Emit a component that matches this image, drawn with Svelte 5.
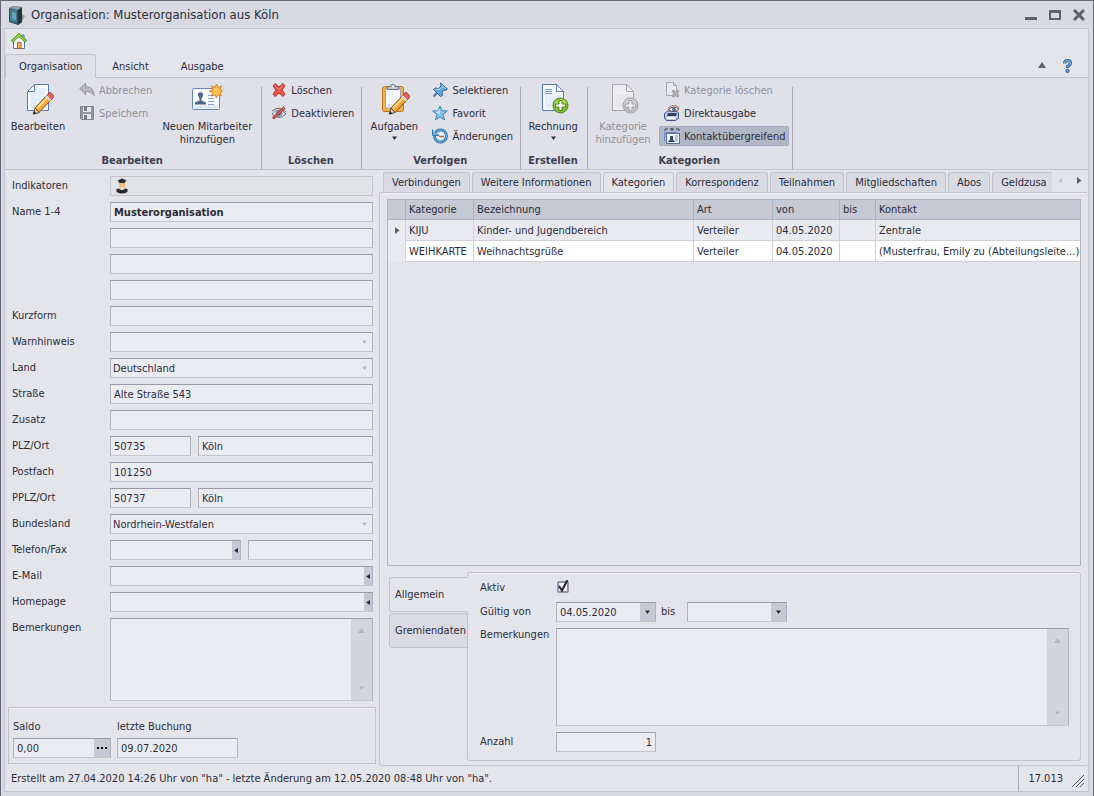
<script>
	let activeRibbon = 'Organisation';
	let activeTab = 'Kategorien';
	let activeSide = 'Allgemein';
	let aktiv = true;

	const ribbonTabs = ['Organisation', 'Ansicht', 'Ausgabe'];
	const tabs = [
		'Verbindungen', 'Weitere Informationen', 'Kategorien', 'Korrespondenz',
		'Teilnahmen', 'Mitgliedschaften', 'Abos', 'Geldzusa',
	];
	const sideTabs = ['Allgemein', 'Gremiendaten'];

	const rows = [
		{ id: 'name1', label: 'Name 1-4', fields: [{ value: 'Musterorganisation', bold: true }] },
		{ id: 'name2', label: '', aria: 'Name 2', fields: [{ value: '' }] },
		{ id: 'name3', label: '', aria: 'Name 3', fields: [{ value: '' }] },
		{ id: 'name4', label: '', aria: 'Name 4', fields: [{ value: '' }] },
		{ id: 'kurzform', label: 'Kurzform', fields: [{ value: '' }] },
		{ id: 'warnhinweis', label: 'Warnhinweis', fields: [{ value: '', type: 'select' }] },
		{ id: 'land', label: 'Land', fields: [{ value: 'Deutschland', type: 'select' }] },
		{ id: 'strasse', label: 'Straße', fields: [{ value: 'Alte Straße 543' }] },
		{ id: 'zusatz', label: 'Zusatz', fields: [{ value: '' }] },
		{ id: 'plz', label: 'PLZ/Ort', fields: [{ value: '50735', size: 'plz' }, { value: 'Köln' }] },
		{ id: 'postfach', label: 'Postfach', fields: [{ value: '101250' }] },
		{ id: 'pplz', label: 'PPLZ/Ort', fields: [{ value: '50737', size: 'plz' }, { value: 'Köln' }] },
		{ id: 'bundesland', label: 'Bundesland', fields: [{ value: 'Nordrhein-Westfalen', type: 'select' }] },
		{ id: 'telefon', label: 'Telefon/Fax', fields: [{ value: '', type: 'action', size: 'tel' }, { value: '' }] },
		{ id: 'email', label: 'E-Mail', fields: [{ value: '', type: 'action' }] },
		{ id: 'homepage', label: 'Homepage', fields: [{ value: '', type: 'action' }] },
	];

	const kategorien = [
		{ kategorie: 'KIJU', bezeichnung: 'Kinder- und Jugendbereich', art: 'Verteiler', von: '04.05.2020', bis: '', kontakt: 'Zentrale' },
		{ kategorie: 'WEIHKARTE', bezeichnung: 'Weihnachtsgrüße', art: 'Verteiler', von: '04.05.2020', bis: '', kontakt: '(Musterfrau, Emily zu (Abteilungsleite...)' },
	];
	let selected = 0;
</script>

{#snippet arrow(dir)}
	<svg class="arrow" width="7" height="7" viewBox="0 0 7 7" aria-hidden="true">
		{#if dir === 'down'}<path d="M1 1.500h5L3.500 5z" />
		{:else if dir === 'up'}<path d="M0 6h7L3.500 1z" />
		{:else if dir === 'left'}<path d="M5 1v5L1 3.500z" />
		{:else}<path d="M1 0v7L5.500 3.500z" />{/if}
	</svg>
{/snippet}

{#snippet pencil()}
	<path d="M13 25L24.500 12.500l4.500 4.500L17 29.500z" fill="#f5a536" stroke="#8d5518" />
	<path d="M15 25.500L26 14" stroke="#ffd98a" stroke-width="2" />
	<path d="M13 25l4 4.500-5.500 1.500z" fill="#f4dcb0" stroke="#5c4632" />
	<path d="M12 28l2.500 2.500-3.500 1z" fill="#222" />
	<path d="M24.500 12.500l2.500-2.500q1-.8 2 0l2.500 2.500q.8 1 0 2L29 17z" fill="#e2675a" stroke="#a03c33" />
	<path d="M24 13l4.500 4.500" stroke="#dfe2ec" stroke-width="2" />
{/snippet}

{#snippet icon(name)}
	{#if name === 'app'}
		<svg width="18" height="20" viewBox="0 0 18 20" aria-hidden="true">
			<path d="M12 8l5 3-4 7H9z" fill="#9a9ca9" />
			<path d="M1 3l4-2 9 1v15l-4 3-9-3z" fill="#33505e" />
			<path d="M2 4l7 1v13l-7-2z" fill="#44788c" />
			<path d="M4 7l4 1v7l-4-1z" fill="#67a5b9" />
			<path d="M10 5l4-3v15l-4 3z" fill="#26343d" />
			<path d="M1 3l4-2 9 1-4 3z" fill="#8d9ea8" />
		</svg>
	{:else if name === 'home'}
		<svg width="16" height="16" viewBox="0 0 16 16" aria-hidden="true">
			<path d="M11 2h2v4h-2z" fill="#fff" stroke="#526ca1" />
			<path d="M2.500 8L8 3l5.500 5v7.500h-11z" fill="#f8fbff" stroke="#5471a5" />
			<path d="M6.500 15.500v-6h3.500v6z" fill="#f6b45b" stroke="#ad5b17" />
			<path d="M1 8.500L8 2l7 6.500" fill="none" stroke="#4b8419" stroke-width="3" />
			<path d="M1.500 8L8 2l6.500 6" fill="none" stroke="#a4db48" stroke-width="1.500" />
		</svg>
	{:else if name === 'edit'}
		<svg width="32" height="32" viewBox="0 0 32 32" aria-hidden="true">
			<path d="M5.500 8.500l7-7h14v26h-21z" fill="#f7fbff" stroke="#5878b8" />
			<path d="M8 10l5-5h11v20H8z" fill="#e6eef9" />
			<path d="M5.500 8.500h7v-7z" fill="#fff" stroke="#5878b8" />
			{@render pencil()}
		</svg>
	{:else if name === 'undo'}
		<svg width="16" height="16" viewBox="0 0 16 16" aria-hidden="true">
			<path d="M.8 6.500L6.500 1.500v3q8 0 8.500 9-3-4.500-8.500-4v3z" fill="#b8b9bd" stroke="#919298" />
		</svg>
	{:else if name === 'save'}
		<svg width="16" height="16" viewBox="0 0 16 16" aria-hidden="true">
			<path d="M1.500 1.500h13v13h-12l-1-1z" fill="#94959b" stroke="#818289" />
			<path d="M4 2h8v5H4zM4 9h8v5H4z" fill="#e6e7ea" />
			<path d="M5 2h3v4H5zM5 10h3v4H5z" fill="#777980" />
		</svg>
	{:else if name === 'contact'}
		<svg width="32" height="32" viewBox="0 0 32 32" aria-hidden="true">
			<rect x="1.500" y="5.500" width="27" height="21" rx="1" fill="#f8fbff" stroke="#6685bc" />
			<path d="M3 24h24" stroke="#dce7f6" stroke-width="3" />
			<path d="M4 21.500v-2l4.500-2v-2q-2-2-1.500-5 2.500-2.500 5 0 .5 3-1.500 5v2l4.500 2v2z" fill="#50658c" />
			<path d="M17 12.500h6M17 15.500h6M17 18.500h6M17 21.500h6" stroke="#819fc9" />
			<path d="M25.500 1l1.400 3.600 3.500-1.600-1.300 3.500 2.500 1.500-2.500 1.500 1.300 3.500-3.500-1.400-1.400 3.400-1.400-3.400-3.500 1.400 1.400-3.500L18.500 8l3.500-1.500L20.600 3l3.500 1.600z" fill="#ffc251" stroke="#cf812a" />
		</svg>
	{:else if name === 'delete'}
		<svg width="16" height="16" viewBox="0 0 16 16" aria-hidden="true">
			<path d="M2 4l2-2.500L8 5l4-3.500L14 4l-3 4 3 4-2 2.500L8 11l-4 3.500L2 12l3-4z" fill="#e7564c" stroke="#b7322e" />
			<path d="M4 3.500l4 4 4-4" stroke="#fa9286" fill="none" />
		</svg>
	{:else if name === 'deactivate'}
		<svg width="16" height="16" viewBox="0 0 16 16" aria-hidden="true">
			<path d="M1 9q7-8 14 0-7 7-14 0z" fill="#f6f8fd" stroke="#6a6d88" />
			<path d="M1 6q7-6 14 1" fill="none" stroke="#80604f" />
			<circle cx="8" cy="8.500" r="3.500" fill="#8896bd" /><circle cx="8" cy="8.500" r="1.500" fill="#343b52" />
			<path d="M2 13.500L13.500 2.500" stroke="#a93839" stroke-width="3" /><path d="M2.500 13L13 3" stroke="#e98075" />
		</svg>
	{:else if name === 'tasks'}
		<svg width="32" height="32" viewBox="0 0 32 32" aria-hidden="true">
			<rect x="4.500" y="3.500" width="21" height="25" rx="2" fill="#f4af48" stroke="#b97724" />
			<path d="M7.500 6h15v19h-15z" fill="#f6f8fe" stroke="#a6a6b4" />
			<path d="M10 21h6l-5 4H9z" fill="#d9dfed" />
			<path d="M9.500 6.500v-3h3q0-2 2.500-2t2.500 2h3v3z" fill="#bbc3d5" stroke="#6a7490" />
			<path d="M14 3.500h2" stroke="#fff" stroke-width="2" />
			{@render pencil()}
		</svg>
	{:else if name === 'pin'}
		<svg width="16" height="16" viewBox="0 0 16 16" aria-hidden="true">
			<path d="M1.500 14.500L6 10" stroke="#577492" stroke-width="2" />
			<path d="M8.500 1l7 6-2.500 1.500-1-.5-2 2 .5 3.500-2 1L1.500 7.500l2-1.500 3 .5L9 4z" fill="#62a8dc" stroke="#2a6398" />
			<path d="M9.500 3l4 3.500M4 7.500l4-.5 2-2" fill="none" stroke="#b3e1fb" />
		</svg>
	{:else if name === 'star'}
		<svg width="16" height="16" viewBox="0 0 16 16" aria-hidden="true">
			<path d="M8 1l2 4.700 5.300.3-4.200 3.500 1.600 5.500L8 12l-4.700 3 1.600-5.500L.7 6 6 5.700z" fill="#84c2ea" stroke="#3e87bd" />
			<path d="M8 3.500v6l-4-2.500" fill="#b8e0f8" />
		</svg>
	{:else if name === 'history'}
		<svg width="16" height="16" viewBox="0 0 16 16" aria-hidden="true">
			<circle cx="8.500" cy="8" r="6" fill="#e9f5ff" stroke="#347baa" stroke-width="3" />
			<circle cx="8.500" cy="8" r="6" fill="none" stroke="#75b6df" />
			<path d="M.5 1.500v6h6l-2-2" fill="#75b6df" stroke="#347baa" />
			<path d="M6 7l2.500 2" stroke="#47637f" /><path d="M8 8.500h4" stroke="#d65347" stroke-width="1.500" />
		</svg>
	{:else if name === 'invoice' || name === 'addcat'}
		<svg width="32" height="32" viewBox="0 0 32 32" class:gray={name === 'addcat'} aria-hidden="true">
			<path d="M5.500 1.500h14l7 7v19h-21z" fill="#f5faff" stroke="#5878b8" />
			<path d="M8 12h16v13H8z" fill="#e5eefa" />
			<path d="M19.500 1.500v7h7z" fill="#fff" stroke="#5878b8" />
			{#if name === 'invoice'}<path d="M8 6.500h7M8 8.500h7M8 10.500h7" stroke="#7893c6" />{/if}
			<circle cx="23.500" cy="22.500" r="7.500" fill="#82ba35" stroke="#4d861f" />
			<path d="M17 22q1-6 6.500-6t6.500 6" fill="#a9d957" />
			<path d="M22 17.500h3V21h3.500v3H25v3.500h-3V24h-3.500v-3H22z" fill="#fff" stroke="#4d861f" />
		</svg>
	{:else if name === 'delcat'}
		<svg width="16" height="16" viewBox="0 0 16 16" class="gray" aria-hidden="true">
			<path d="M2.500.5h7l3 3v10h-10z" fill="#f0f1f3" stroke="#777980" /><path d="M9.500.5v3h3" fill="none" stroke="#777980" />
			<path d="M8 9l2-1 1.500 1.500L13 8l2 1-1.500 2.500L15 14l-2 1-1.500-1.500L10 15l-2-1 1.500-2.500z" fill="#888a90" stroke="#686a70" />
		</svg>
	{:else if name === 'print'}
		<svg width="16" height="16" viewBox="0 0 16 16" aria-hidden="true">
			<path d="M3.500 6h9l2 2v5.500l-3 2h-9L.5 13V9z" fill="#bac9e3" stroke="#395084" />
			<path d="M4 8h9l-1 3H3z" fill="#30415e" /><path d="M3 12h8v2H3z" fill="#fff" />
			<path d="M4.500 4.500Q9.500 0 15 4q-5 5-10.500.5z" fill="#fff" stroke="#684237" />
			<circle cx="10" cy="4.500" r="2" fill="#4c7090" /><path d="M4 3.500Q9-2 15 2.500" fill="none" stroke="#a97860" />
		</svg>
	{:else if name === 'across'}
		<svg width="16" height="16" viewBox="0 0 16 16" aria-hidden="true">
			<path d="M1 3V1h3M6 1h4M12 1h3v2M8 0v3" fill="none" stroke="#35445c" />
			<path d="M.5 13V4.500h12" fill="none" stroke="#6886b9" />
			<rect x="2.500" y="5.500" width="13" height="10" fill="#f4f9ff" stroke="#4f70a9" />
			<path d="M4 14v-1l2-1V8h3v4l2 1v1z" fill="#354b70" /><path d="M11 8h3M11 10h3M11 12h3" stroke="#6e91c0" />
		</svg>
	{:else if name === 'graduate'}
		<svg width="14" height="16" viewBox="0 0 14 16" aria-hidden="true">
			<path d="M4 4h6v4.500Q7 13 4 8.500z" fill="#f2bd7b" />
			<path d="M2.500 2.500L7 .5l4.500 2L10 4v1H4V4z" fill="#302d2c" />
			<path d="M1.500 11l2.500-.5q3 3 6 0l2.500.5v3q-5.500 3-11 0z" fill="#292b2d" />
			<path d="M6 9h2v3H6z" fill="#f8dfc1" />
		</svg>
	{/if}
{/snippet}

{#snippet small(name, label, disabled = false, pressed = false)}
	<button class="small" class:pressed {disabled}>{@render icon(name)}<span>{label}</span></button>
{/snippet}

<div class="window">
	<header class="titlebar">
		{@render icon('app')}
		<h1>Organisation: Musterorganisation aus Köln</h1>
		<div class="controls">
			<button aria-label="Minimieren"><svg width="12" height="12" viewBox="0 0 12 12"><path d="M0 9.500h12" stroke-width="3" /></svg></button>
			<button aria-label="Maximieren"><svg width="12" height="12" viewBox="0 0 12 12"><path d="M1 2.500h10v7.500H1z" fill="none" stroke-width="2" /><path d="M0 2.500h12" stroke-width="3" /></svg></button>
			<button aria-label="Schließen"><svg width="12" height="12" viewBox="0 0 12 12"><path d="M1 1l10 10M11 1L1 11" stroke-width="3" /></svg></button>
		</div>
	</header>

	<div class="frame">
		<div class="quick"><button aria-label="Start">{@render icon('home')}</button></div>

		<nav class="ribbonTabs">
			{#each ribbonTabs as tab}
				<button class:active={activeRibbon === tab} on:click={() => activeRibbon = tab}>{tab}</button>
			{/each}
			<div class="help">
				<button aria-label="Menüband minimieren">
					<svg width="8" height="7" viewBox="0 0 8 7"><path d="M0 6h8L4 0z" fill="#5f6171" /></svg>
				</button>
				<button aria-label="Hilfe">
					<svg width="11" height="14" viewBox="0 0 11 14">
						<path d="M2.500 4.500q0-3 3-3t3 2.500q0 2-3 3.500V9" fill="none" stroke="#3566a0" stroke-width="3" />
						<path d="M2.500 4.500q0-3 3-3t3 2.500q0 2-3 3.500V8" fill="none" stroke="#8fc5ec" />
						<circle cx="5.500" cy="12" r="1.700" fill="#5c96cd" stroke="#3566a0" />
					</svg>
				</button>
			</div>
		</nav>

		<div class="ribbon">
			<section class="group">
				<div class="tools">
					<button class="big edit">{@render icon('edit')}<span>Bearbeiten</span></button>
					<div class="stack">
						{@render small('undo', 'Abbrechen', true)}
						{@render small('save', 'Speichern', true)}
					</div>
					<button class="big employee">{@render icon('contact')}<span>Neuen Mitarbeiter hinzufügen</span></button>
				</div>
				<h2>Bearbeiten</h2>
			</section>
			<section class="group">
				<div class="tools">
					<div class="stack">
						{@render small('delete', 'Löschen')}
						{@render small('deactivate', 'Deaktivieren')}
					</div>
				</div>
				<h2>Löschen</h2>
			</section>
			<section class="group">
				<div class="tools">
					<button class="big">{@render icon('tasks')}<span>Aufgaben</span>{@render arrow('down')}</button>
					<div class="stack">
						{@render small('pin', 'Selektieren')}
						{@render small('star', 'Favorit')}
						{@render small('history', 'Änderungen')}
					</div>
				</div>
				<h2>Verfolgen</h2>
			</section>
			<section class="group">
				<div class="tools">
					<button class="big">{@render icon('invoice')}<span>Rechnung</span>{@render arrow('down')}</button>
				</div>
				<h2>Erstellen</h2>
			</section>
			<section class="group">
				<div class="tools">
					<button class="big category" disabled>{@render icon('addcat')}<span>Kategorie hinzufügen</span></button>
					<div class="stack">
						{@render small('delcat', 'Kategorie löschen', true)}
						{@render small('print', 'Direktausgabe')}
						{@render small('across', 'Kontaktübergreifend', false, true)}
					</div>
				</div>
				<h2>Kategorien</h2>
			</section>
		</div>

		<main>
			<form class="left" on:submit|preventDefault>
				<div class="row">
					<span class="label">Indikatoren</span>
					<div class="field indicators">{@render icon('graduate')}</div>
				</div>
				{#each rows as row}
					<div class="row">
						<label class="label" for={row.id}>{row.label}</label>
						{#each row.fields as field, i}
							<div class="field {field.size || ''}">
								{#if field.type === 'select'}
									<select id={row.id}><option>{field.value}</option></select>
									<span class="drop pale">{@render arrow('down')}</span>
								{:else}
									<input
										id={i === 0 ? row.id : row.id + i}
										aria-label={row.aria || (i > 0 ? row.label.split('/')[1] : undefined)}
										class:bold={field.bold}
										value={field.value}
									/>
									{#if field.type === 'action'}
										<button type="button" class="action" aria-label="{row.label} öffnen">{@render arrow('left')}</button>
									{/if}
								{/if}
							</div>
						{/each}
					</div>
				{/each}
				<div class="row">
					<label class="label" for="bemerkungen">Bemerkungen</label>
					<div class="field area">
						<textarea id="bemerkungen"></textarea>
						<div class="scroll">{@render arrow('up')}{@render arrow('down')}</div>
					</div>
				</div>

				<div class="saldo">
					<div class="cell">
						<label for="saldo">Saldo</label>
						<div class="field">
							<input id="saldo" value="0,00" />
							<button type="button" class="dots" aria-label="Saldo anzeigen">
								<svg width="11" height="3" viewBox="0 0 11 3"><path d="M0 0h2v2H0zM4 0h2v2H4zM8 0h2v2H8z" /></svg>
							</button>
						</div>
					</div>
					<div class="cell booking">
						<label for="buchung">letzte Buchung</label>
						<div class="field"><input id="buchung" value="09.07.2020" /></div>
					</div>
				</div>
			</form>

			<div class="right">
				<div class="tabbar">
					<div class="tabs">
						{#each tabs as tab}
							<button class:active={activeTab === tab} on:click={() => activeTab = tab}>{tab}</button>
						{/each}
					</div>
					<div class="pager">
						<button aria-label="Zurück" disabled>{@render arrow('left')}</button>
						<button aria-label="Weiter">{@render arrow('right')}</button>
					</div>
				</div>

				<div class="panel">
					<div class="grid">
						<table>
							<colgroup>
								<col class="mark" /><col class="kat" /><col class="bez" /><col class="art" /><col class="von" /><col class="bis" /><col />
							</colgroup>
							<thead>
								<tr><th></th><th>Kategorie</th><th>Bezeichnung</th><th>Art</th><th>von</th><th>bis</th><th>Kontakt</th></tr>
							</thead>
							<tbody>
								{#each kategorien as k, i}
									<tr class:selected={selected === i} on:click={() => selected = i}>
										<td class="marker">{#if selected === i}{@render arrow('right')}{/if}</td>
										<td>{k.kategorie}</td>
										<td>{k.bezeichnung}</td>
										<td>{k.art}</td>
										<td>{k.von}</td>
										<td>{k.bis}</td>
										<td>{k.kontakt}</td>
									</tr>
								{/each}
							</tbody>
						</table>
					</div>

					<div class="detail">
						<div class="sideTabs">
							{#each sideTabs as tab}
								<button class:active={activeSide === tab} on:click={() => activeSide = tab}>{tab}</button>
							{/each}
						</div>
						<div class="detailPanel">
							<div class="line">
								<label class="dlabel" for="aktiv">Aktiv</label>
								<span class="check">
									<input id="aktiv" type="checkbox" bind:checked={aktiv} />
									{#if aktiv}
										<svg width="12" height="14" viewBox="0 0 12 14" aria-hidden="true"><path d="M2 6l3 4.500L10.500 0" fill="none" stroke="#23242e" stroke-width="2" /></svg>
									{/if}
								</span>
							</div>
							<div class="line dates">
								<label class="dlabel" for="von">Gültig von</label>
								<div class="field date">
									<input id="von" value="04.05.2020" />
									<button class="drop" aria-label="Kalender von">{@render arrow('down')}</button>
								</div>
								<label class="until" for="bis">bis</label>
								<div class="field date">
									<input id="bis" value="" />
									<button class="drop" aria-label="Kalender bis">{@render arrow('down')}</button>
								</div>
							</div>
							<div class="line grow">
								<label class="dlabel" for="bem2">Bemerkungen</label>
								<div class="field area">
									<textarea id="bem2"></textarea>
									<div class="scroll">{@render arrow('up')}{@render arrow('down')}</div>
								</div>
							</div>
							<div class="line">
								<label class="dlabel" for="anzahl">Anzahl</label>
								<div class="field date"><input id="anzahl" class="number" value="1" /></div>
							</div>
						</div>
					</div>
				</div>
			</div>
		</main>

		<footer>
			<span class="status">Erstellt am 27.04.2020 14:26 Uhr von "ha" - letzte Änderung am 12.05.2020 08:48 Uhr von "ha".</span>
			<span class="version">17.013</span>
			<svg class="grip" width="12" height="12" viewBox="0 0 12 12" aria-hidden="true"><path d="M0 12L12 0M4 12l8-8M8 12l4-4" stroke="#555765" fill="none" /></svg>
		</footer>
	</div>
</div>

<style>
	:global(body) {
		margin: 0;
		background: #d8d9e1;
	}

	.window, .window * {
		box-sizing: border-box;
	}
	.window {
		display: flex;
		flex-direction: column;
		min-height: 100vh;
		padding: 0 4px 4px 3px;
		border: 1px solid #676779;
		background: #d8d9e1;
		color: #2b2c3a;
		font: 11px/13px "DejaVu Sans Condensed", "Noto Sans", sans-serif;
	}
	button, input, select, textarea {
		margin: 0;
		padding: 0;
		border: 0;
		border-radius: 0;
		background: none;
		color: inherit;
		font: inherit;
		outline: none;
	}
	svg {
		display: block;
		flex: none;
	}
	.gray {
		filter: grayscale(1);
		opacity: 0.55;
	}
	.arrow {
		fill: currentColor;
	}

	.titlebar {
		display: flex;
		align-items: center;
		height: 27px;
		padding: 0 4px;
	}
	h1 {
		flex: 1;
		margin: 0 0 0 5px;
		font-size: 13px;
		font-weight: normal;
		line-height: 20px;
	}
	.controls {
		display: flex;
		gap: 12px;
		stroke: #5f6171;
	}

	.frame {
		display: flex;
		flex: 1;
		flex-direction: column;
		border: 1px solid #c1c2cc;
		background: #e4e5ea;
	}
	.quick {
		height: 25px;
		padding: 4px 6px;
	}
	.ribbonTabs {
		display: flex;
		height: 24px;
		border-bottom: 1px solid #c1c2cc;
	}
	.ribbonTabs > button {
		height: 24px;
		padding: 0 15px;
		border: 1px solid transparent;
		border-bottom: 0;
	}
	.ribbonTabs > button.active {
		padding: 0 13px;
		border-color: #c1c2cc;
		border-radius: 3px 3px 0 0;
		background: #dfe0e8;
	}
	.help {
		display: flex;
		align-items: center;
		gap: 16px;
		margin-left: auto;
		padding-right: 15px;
	}

	.ribbon {
		display: flex;
		height: 92px;
		border-bottom: 1px solid #c1c2cc;
		background: #dfe0e8;
	}
	.group {
		display: flex;
		flex-direction: column;
		justify-content: space-between;
		padding: 2px 3px 0 1px;
		border-right: 1px solid #a9aab5;
		border-image: linear-gradient(transparent 10px, #a9aab5 10px) 1;
	}
	.tools {
		display: flex;
	}
	h2 {
		margin: 0 0 1px;
		color: #3f404e;
		font-size: 11px;
		font-weight: bold;
		line-height: 14px;
		text-align: center;
	}
	.big {
		display: flex;
		flex-direction: column;
		align-items: center;
		width: 62px;
		padding-top: 3px;
	}
	.big span {
		margin-top: 5px;
	}
	.big .arrow {
		margin-top: 2px;
	}
	.edit {
		width: 64px;
		margin-right: 2px;
	}
	.employee {
		width: 102px;
	}
	.category {
		width: 68px;
	}
	.stack {
		display: flex;
		flex-direction: column;
		gap: 3px;
		padding-left: 2px;
	}
	.stack:first-child {
		padding-left: 3px;
	}
	.small {
		display: flex;
		align-items: center;
		gap: 4px;
		height: 20px;
		padding: 0 3px 0 4px;
		border: 1px solid transparent;
		border-radius: 2px;
		white-space: nowrap;
	}
	.small.pressed {
		border-color: #a5a9b9;
		background: #b2b7c5;
	}
	button:disabled {
		color: #8f909c;
	}

	main {
		display: flex;
		flex: 1;
	}
	.left {
		display: flex;
		flex: none;
		flex-direction: column;
		gap: 6px;
		width: 374px;
		padding: 6px 3px 2px;
	}
	.row {
		display: flex;
		gap: 7px;
		padding: 0 3px 0 4px;
	}
	.label {
		flex: none;
		width: 91px;
		line-height: 19px;
	}
	.field {
		display: flex;
		flex: 1;
		min-width: 0;
		height: 20px;
		border: 1px solid #b2b2c1;
		border-top-color: #9999aa;
		border-bottom-color: #c3c4cd;
		background: #ebecf2;
	}
	.field input, .field select {
		flex: 1;
		width: 0;
		min-width: 0;
		padding: 0 3px;
		appearance: none;
	}
	.field select {
		padding: 0 2px;
	}
	.field .bold {
		font-weight: bold;
	}
	.field.plz {
		flex: 0 0 81px;
	}
	.field.tel {
		flex: 0 0 131px;
	}
	.indicators {
		align-items: center;
		padding-left: 4px;
		border-color: #c3c4cd;
		background: #e2e3e7;
	}
	.drop, .action, .dots {
		display: flex;
		flex: none;
		align-items: center;
		justify-content: center;
		width: 15px;
		background: #c6c8d4;
	}
	.drop.pale {
		background: none;
		color: #b4b5c1;
	}
	.action {
		width: 8px;
	}
	.area {
		height: 83px;
	}
	textarea {
		flex: 1;
		min-width: 0;
		resize: none;
	}
	.scroll {
		display: flex;
		flex: none;
		flex-direction: column;
		align-items: center;
		justify-content: space-between;
		width: 21px;
		padding: 8px 0;
		background: #d2d4de;
		color: #b3b5c0;
	}

	.saldo {
		display: flex;
		gap: 6px;
		height: 57px;
		padding: 10px 4px 0;
		border: 1px solid #c1c2cc;
		box-shadow: inset 0 1px #f3f3f7;
	}
	.cell {
		display: flex;
		flex-direction: column;
		gap: 3px;
		width: 98px;
		line-height: 17px;
	}
	.cell .field {
		flex: none;
	}
	.booking {
		width: 121px;
	}
	.dots {
		width: 16px;
	}

	.right {
		display: flex;
		flex: 1;
		flex-direction: column;
		min-width: 0;
	}
	.tabbar {
		display: flex;
		height: 22px;
		padding: 2px 4px 0;
	}
	.tabs {
		display: flex;
		flex: 1;
		gap: 2px;
		min-width: 0;
		overflow: hidden;
	}
	.tabs button {
		flex: none;
		padding: 0 8px;
		border: 1px solid #c1c2cc;
		border-bottom: 0;
		border-radius: 3px 3px 0 0;
		background: #d9dae2;
		white-space: nowrap;
	}
	.tabs button.active {
		background: #e4e5ea;
	}
	.pager {
		display: flex;
		gap: 12px;
		width: 32px;
		padding: 0 0 3px 5px;
		color: #5f6171;
	}
	.pager button:disabled {
		color: #c4c5ce;
	}

	.panel {
		display: flex;
		flex: 1;
		flex-direction: column;
		gap: 6px;
		padding: 6px 7px 4px;
		border: 1px solid #c1c2cc;
		border-right: 0;
		border-radius: 3px;
		box-shadow: inset 0 1px #f3f3f7;
	}
	.grid {
		flex: 1;
		border: 1px solid #b2b3c1;
	}
	table {
		width: 100%;
		border-collapse: separate;
		border-spacing: 0;
		table-layout: fixed;
	}
	.mark { width: 18px; }
	.kat { width: 68px; }
	.bez { width: 220px; }
	.art { width: 79px; }
	.von { width: 67px; }
	.bis { width: 36px; }
	th, td {
		height: 21px;
		padding: 0 3px;
		border-right: 1px solid #d0d1da;
		border-bottom: 1px solid #d0d1da;
		background: #fff;
		font-weight: normal;
		text-align: left;
		white-space: nowrap;
	}
	th {
		height: 20px;
		border-color: #b2b3c1;
		background: #c6c8d4;
	}
	th:last-child, td:last-child {
		padding-right: 0;
		border-right: 0;
	}
	.selected td, td.marker {
		background: #e9eaf0;
	}
	td.marker {
		padding-left: 6px;
		border-bottom: 0;
		color: #5f6171;
	}

	.detail {
		display: flex;
		height: 189px;
	}
	.sideTabs {
		display: flex;
		flex-direction: column;
		gap: 1px;
		margin-right: -1px;
		padding: 5px 0 0 2px;
	}
	.sideTabs button {
		width: 79px;
		height: 35px;
		padding-left: 5px;
		border: 1px solid #c1c2cc;
		border-radius: 3px 0 0 3px;
		background: #d9dae2;
		text-align: left;
		white-space: nowrap;
	}
	.sideTabs button.active {
		z-index: 1;
		border-right-color: #e4e5ea;
		background: #e4e5ea;
	}
	.detailPanel {
		display: flex;
		flex: 1;
		flex-direction: column;
		min-width: 0;
		padding: 5px 11px 8px 12px;
		border: 1px solid #c1c2cc;
		border-radius: 3px;
		box-shadow: inset 0 1px #f3f3f7;
	}
	.line {
		display: flex;
		line-height: 19px;
	}
	.dates {
		margin: 5px 0 6px;
	}
	.grow {
		flex: 1;
		margin-bottom: 6px;
	}
	.grow .dlabel {
		line-height: 13px;
	}
	.line .area {
		height: auto;
	}
	.dlabel {
		flex: none;
		width: 76px;
	}
	.date {
		flex: 0 0 100px;
	}
	.until {
		width: 31px;
		padding-left: 5px;
	}
	.number {
		text-align: right;
	}
	.check {
		display: grid;
		align-items: center;
		width: 14px;
		height: 18px;
		margin-left: 1px;
	}
	.check input, .check svg {
		grid-area: 1 / 1;
	}
	.check input {
		width: 12px;
		height: 12px;
		border: 2px solid #9192a5;
		border-radius: 2px;
		background: #f3f3f8;
		appearance: none;
	}
	.check svg {
		pointer-events: none;
	}

	footer {
		display: flex;
		align-items: center;
		height: 25px;
		padding-left: 6px;
	}
	.status {
		flex: 1;
	}
	.version {
		padding: 0 9px;
		border-left: 1px solid #a9aab5;
		line-height: 25px;
	}
	.grip {
		align-self: flex-end;
		margin: 0 4px 4px 0;
	}
</style>
